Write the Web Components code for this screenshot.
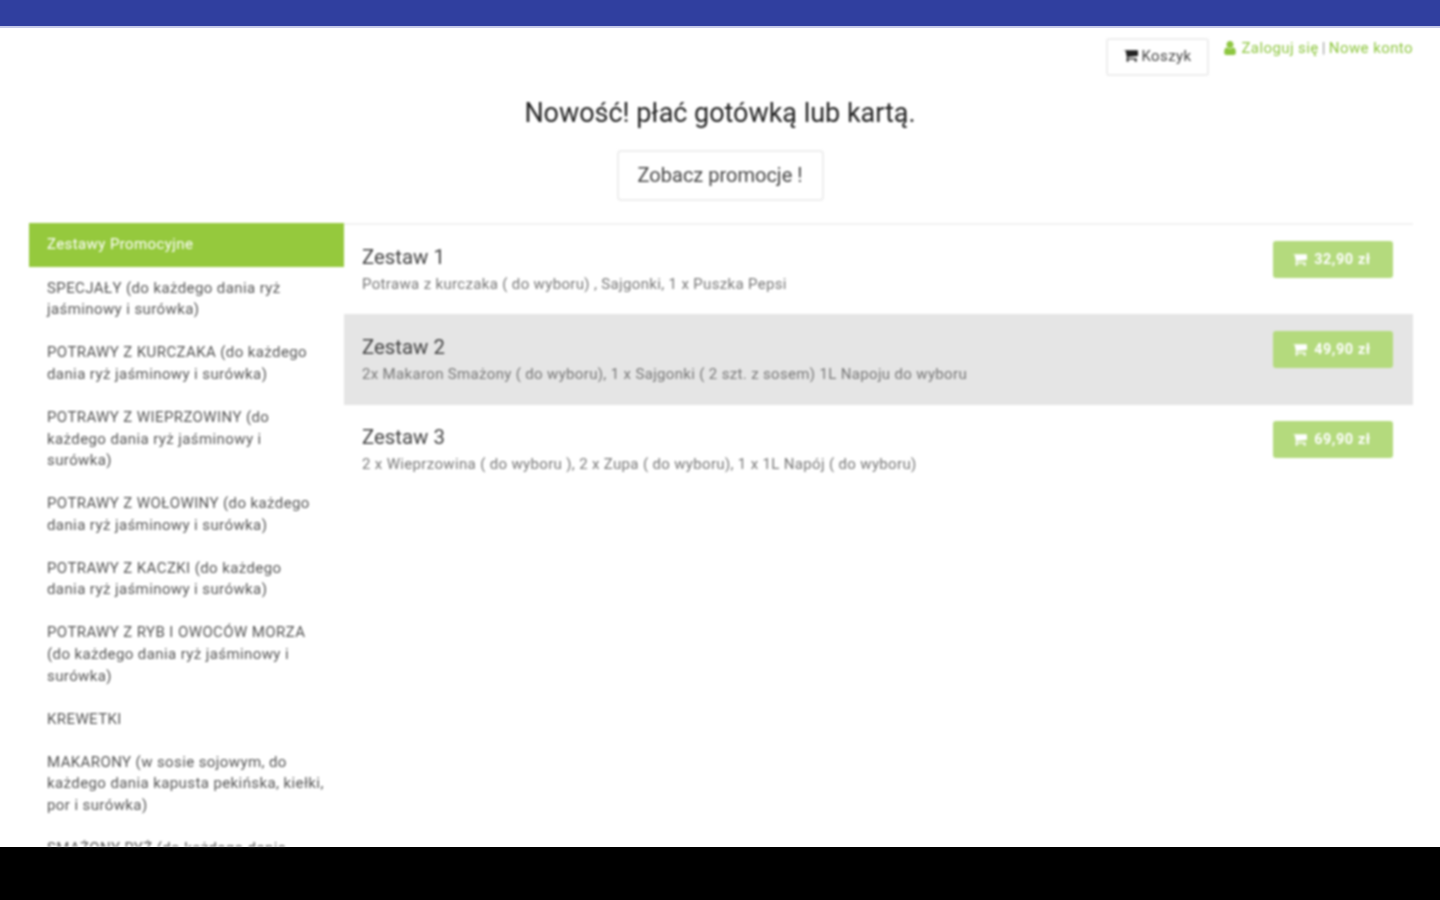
<!DOCTYPE html>
<html lang="pl">
<head>
<meta charset="utf-8">
<title>Zestawy Promocyjne</title>
<style>
html, body { margin: 0; height: 100%; background: #000; font-family: Roboto, "Liberation Sans", sans-serif; }
</style>
</head>
<body>
<app-page>
  <top-tools slot="tools"></top-tools>
  <promo-banner slot="banner" title="Nowość! płać gotówką lub kartą." label="Zobacz promocje !"></promo-banner>
  <menu-item slot="menu" active>Zestawy Promocyjne</menu-item>
  <menu-item slot="menu">SPECJAŁY (do każdego dania ryż jaśminowy i surówka)</menu-item>
  <menu-item slot="menu">POTRAWY Z KURCZAKA (do każdego dania ryż jaśminowy i surówka)</menu-item>
  <menu-item slot="menu">POTRAWY Z WIEPRZOWINY (do każdego dania ryż jaśminowy i surówka)</menu-item>
  <menu-item slot="menu">POTRAWY Z WOŁOWINY (do każdego dania ryż jaśminowy i surówka)</menu-item>
  <menu-item slot="menu">POTRAWY Z KACZKI (do każdego<br>dania ryż jaśminowy i surówka)</menu-item>
  <menu-item slot="menu">POTRAWY Z RYB I OWOCÓW MORZA (do każdego dania ryż jaśminowy i surówka)</menu-item>
  <menu-item slot="menu">KREWETKI</menu-item>
  <menu-item slot="menu">MAKARONY (w sosie sojowym, do każdego dania kapusta pekińska, kiełki, por i surówka)</menu-item>
  <menu-item slot="menu">SMAŻONY RYŻ (do każdego dania<br>ryż jaśminowy i surówka)</menu-item>
  <offer-row slot="offers" name="Zestaw 1" price="32,90 zł">Potrawa z kurczaka ( do wyboru) , Sajgonki, 1 x Puszka Pepsi</offer-row>
  <offer-row slot="offers" name="Zestaw 2" price="49,90 zł" hover>2x Makaron Smażony ( do wyboru), 1 x Sajgonki ( 2 szt. z sosem) 1L Napoju do wyboru</offer-row>
  <offer-row slot="offers" name="Zestaw 3" price="69,90 zł">2 x Wieprzowina ( do wyboru ), 2 x Zupa ( do wyboru), 1 x 1L Napój ( do wyboru)</offer-row>
</app-page>

<script>
const CART = '<svg viewBox="0 256 1664 1280" width="15" height="12" fill="currentColor" aria-hidden="true"><path d="M640 1408q0 52-38 90t-90 38-90-38-38-90 38-90 90-38 90 38 38 90zm896 0q0 52-38 90t-90 38-90-38-38-90 38-90 90-38 90 38 38 90zm128-1088v512q0 24-16.500 42.500t-40.500 21.500l-1044 122q13 60 13 70 0 16-24 64h920q26 0 45 19t19 45-19 45-45 19h-1024q-26 0-45-19t-19-45q0-11 8-31.500t16-36 21.500-40 15.500-29.500l-177-823h-204q-26 0-45-19t-19-45 19-45 45-19h256q16 0 28.500 6.500t19.500 15.500 13 24.500 8 26 5.500 29.500 4.500 26h1201q26 0 45 19t19 45z"/></svg>'

class AppPage extends HTMLElement {
  constructor() {
    super()
    this.attachShadow({mode: 'open'})
    this.shadowRoot.innerHTML = `
<style>
:host { display: flex; flex-direction: column; height: 900px; overflow: hidden; background: #fff; }
.bar { flex: none; height: 26px; background: #303f9f; border-bottom: 2px solid #c5cae9; }
.screen { flex: 1; min-height: 0; overflow: hidden; filter: blur(.8px); }
.head { height: 195px; box-sizing: border-box; }
.columns { display: flex; margin: 0 27px 0 29px; }
.menu { flex: none; width: 315px; }
.offers { flex: 1; border-top: 2px solid #f2f2f2; height: fit-content; }
.nav { flex: none; height: 53px; background: #000; }
</style>
<div class="bar"></div>
<div class="screen">
  <div class="head"><slot name="tools"></slot><slot name="banner"></slot></div>
  <div class="columns">
    <div class="menu"><slot name="menu"></slot></div>
    <div class="offers"><slot name="offers"></slot></div>
  </div>
</div>
<div class="nav"></div>`
  }
}

class TopTools extends HTMLElement {
  constructor() {
    super()
    this.attachShadow({mode: 'open'})
    this.shadowRoot.innerHTML = `
<style>
:host { display: flex; justify-content: flex-end; align-items: flex-start; padding: 10px 27px 0 0; font-size: 15px; letter-spacing: .42px; line-height: 20px; }
.cart { display: flex; align-items: center; box-sizing: border-box; width: 103px; height: 38px; padding: 0 0 2px 15px; color: #444; background: #fff; border: 2px solid #eee; border-radius: 3px; }
.cart svg { margin-right: 3px; color: #222; }
.user { display: flex; align-items: center; margin: 0 0 0 15px; color: #8dc63f; height: 20px; white-space: nowrap; }
.user svg { margin-right: 5px; }
.sep { color: #999; margin: 0 3px; }
</style>
<div class="cart">${CART}Koszyk</div>
<div class="user">
  <svg viewBox="256 128 1280 1536" width="12" height="14" fill="currentColor" aria-hidden="true"><path d="M1536 1399q0 109-62.500 187t-150.500 78h-854q-88 0-150.500-78t-62.500-187q0-85 8.500-160.500t31.500-152 58.500-131 94-89 134.500-34.500q131 128 313 128t313-128q76 0 134.500 34.500t94 89 58.500 131 31.500 152 8.500 160.500zm-256-887q0 159-112.500 271.500t-271.500 112.500-271.500-112.500-112.500-271.500 112.500-271.500 271.500-112.500 271.500 112.500 112.500 271.500z"/></svg>
  <span>Zaloguj się</span><span class="sep">|</span><span>Nowe konto</span>
</div>`
  }
}

class PromoBanner extends HTMLElement {
  constructor() {
    super()
    this.attachShadow({mode: 'open'})
    this.shadowRoot.innerHTML = `
<style>
:host { display: flex; flex-direction: column; align-items: center; margin-top: 19px; }
h2 { margin: 0; font: 400 26.950px/36px Roboto, "Liberation Sans", sans-serif; color: #222; }
.btn { display: flex; align-items: center; justify-content: center; box-sizing: border-box; width: 207px; height: 51px; margin-top: 19px; padding-bottom: 2px; font-size: 20px; color: #444; background: #fff; border: 2px solid #eee; border-radius: 4px; }
</style>
<h2>${this.getAttribute('title')}</h2>
<div class="btn">${this.getAttribute('label')}</div>`
  }
}

class MenuItem extends HTMLElement {
  constructor() {
    super()
    this.attachShadow({mode: 'open'})
    this.shadowRoot.innerHTML = `
<style>
:host { display: block; box-sizing: border-box; padding: 10.770px 18px; font-size: 15px; letter-spacing: .4px; line-height: 21.550px; color: #555; }
:host([active]) { height: 44px; color: #fff; background: #95c93d; }
</style>
<slot></slot>`
  }
}

class OfferRow extends HTMLElement {
  constructor() {
    super()
    this.attachShadow({mode: 'open'})
    this.shadowRoot.innerHTML = `
<style>
:host { display: flex; justify-content: space-between; box-sizing: border-box; height: 90px; padding: 16px 20px 0 18px; }
:host([hover]) { background: #e5e5e5; margin-top: -1px; height: 91px; padding-top: 17px; }
h4 { margin: 1px 0 0; font: 400 20.400px/30px Roboto, "Liberation Sans", sans-serif; color: #444; }
p { margin: 1px 0 0; font-size: 15px; letter-spacing: .34px; line-height: 22px; color: #777; }
.buy { display: flex; align-items: center; justify-content: center; flex: none; box-sizing: border-box; width: 120px; height: 37px; padding-right: 3px; font-size: 14.400px; letter-spacing: .6px; font-weight: 700; color: #fff; background: #b4da7d; border-radius: 3px; }
.buy svg { margin-right: 7px; }
</style>
<div><h4>${this.getAttribute('name')}</h4><p><slot></slot></p></div>
<div class="buy">${CART}${this.getAttribute('price')}</div>`
  }
}

window.customElements.define('app-page', AppPage)
window.customElements.define('top-tools', TopTools)
window.customElements.define('promo-banner', PromoBanner)
window.customElements.define('menu-item', MenuItem)
window.customElements.define('offer-row', OfferRow)
</script>
</body>
</html>
